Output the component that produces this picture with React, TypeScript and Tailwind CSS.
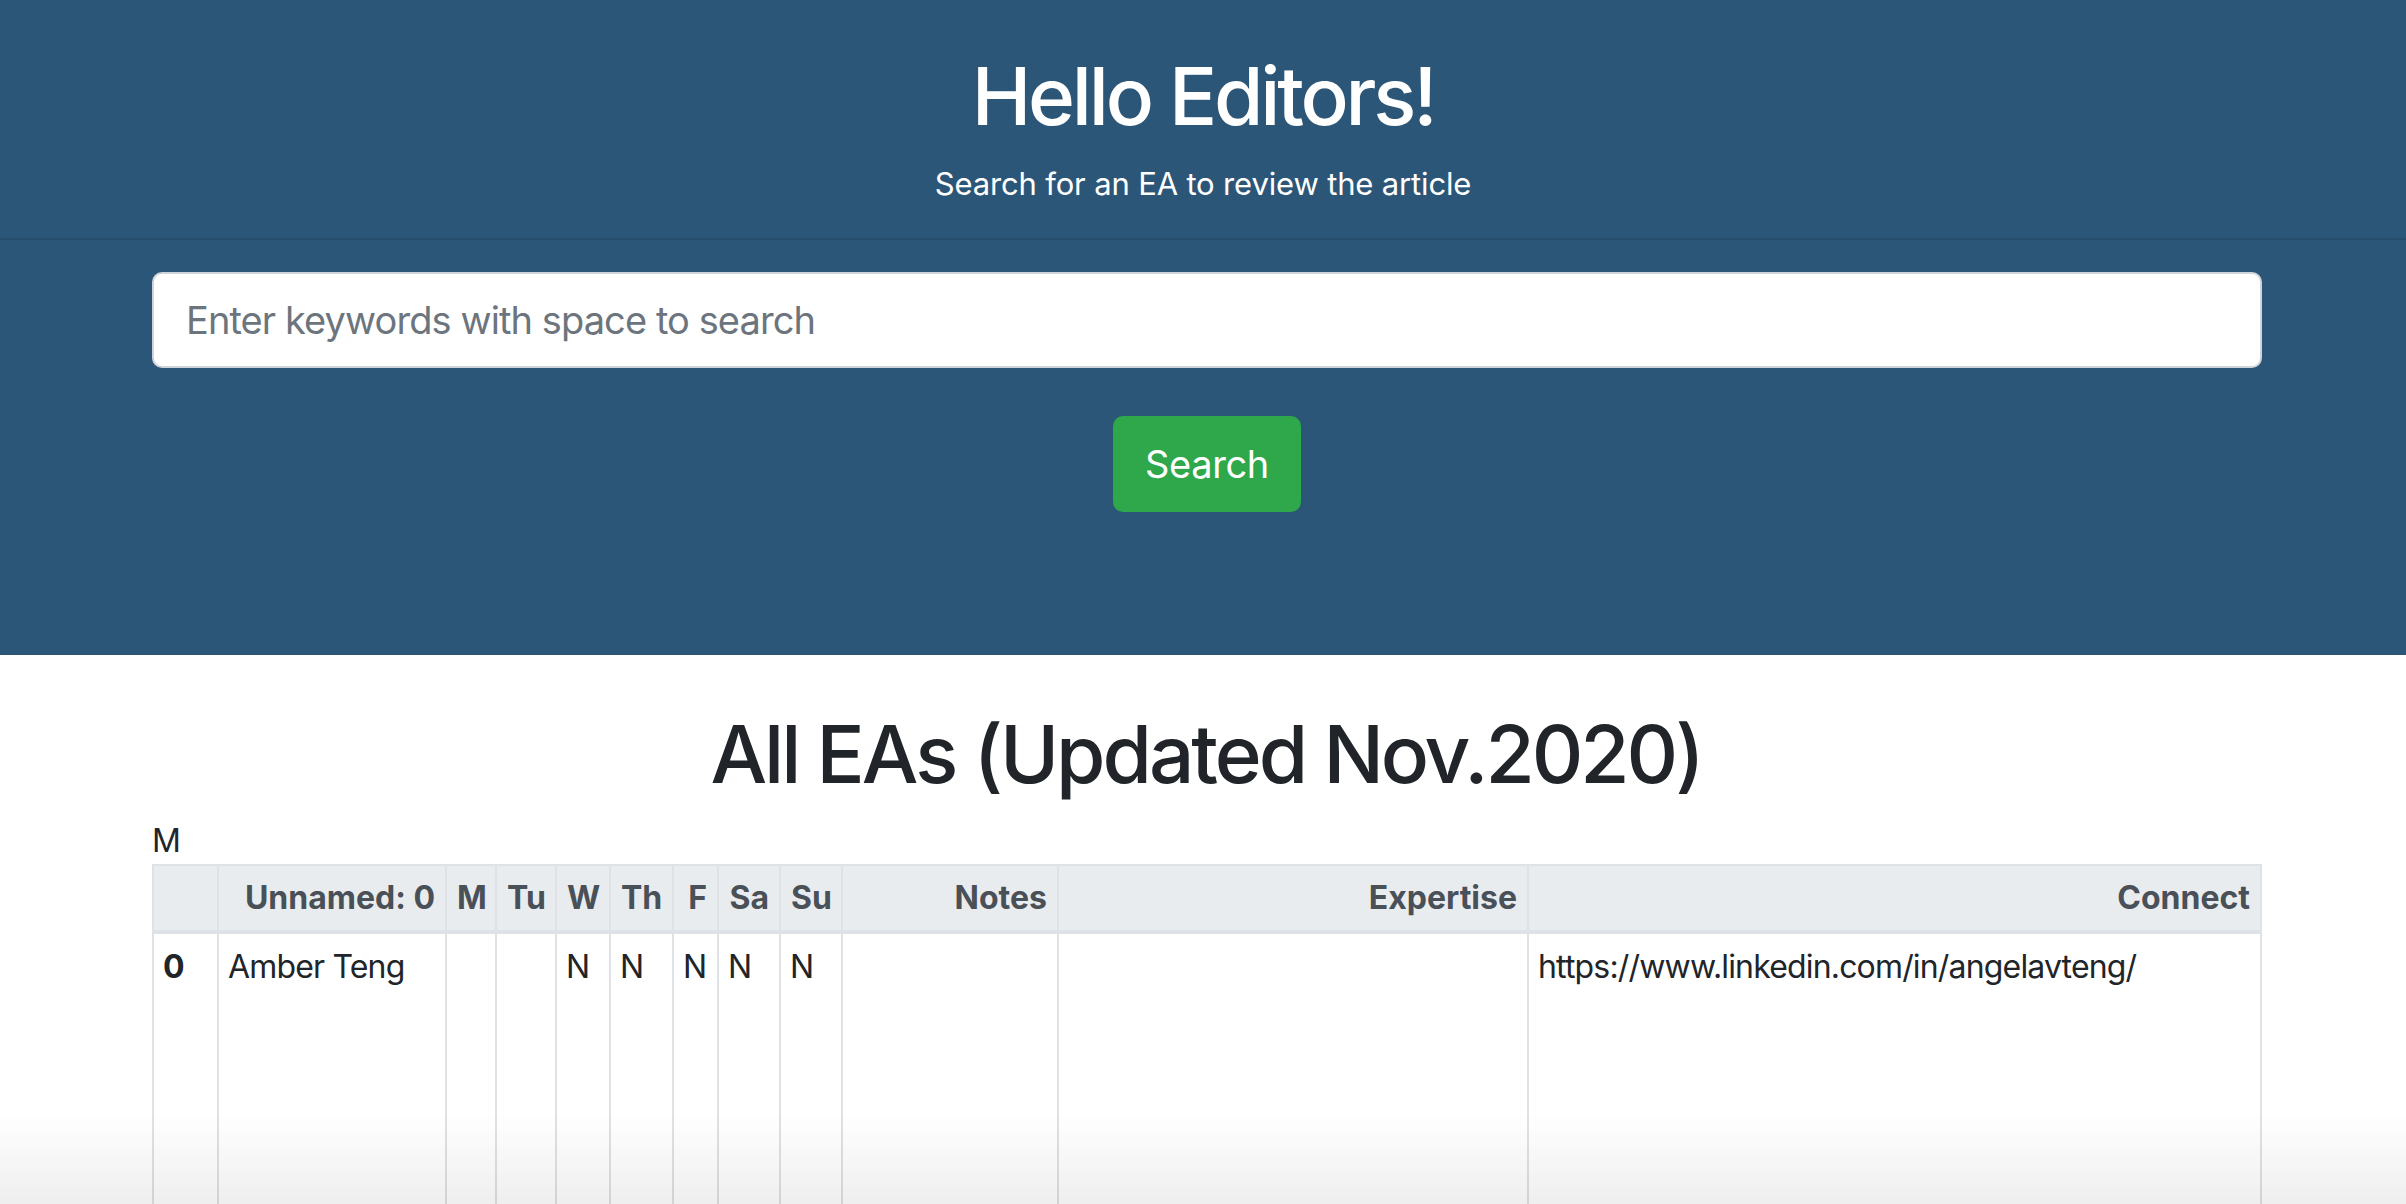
import React from 'react';

const days = ['M', 'Tu', 'W', 'Th', 'F', 'Sa', 'Su'];

const row = {
  idx: '0',
  name: 'Amber Teng',
  days: ['', '', 'N', 'N', 'N', 'N', 'N'],
  notes: '',
  expertise: '',
  connect: 'https://www.linkedin.com/in/angelavteng/',
};

const th =
  'border-2 border-[#dee2e6] border-b-4 px-[10px] py-2 text-right font-bold text-[#495057]';
const td =
  'border-2 border-[#dee2e6] px-[9px] pt-[9px] pb-0 align-top text-left tracking-[-0.026em]';

export default function App() {
  return (
    <div
      className="relative min-h-screen bg-white text-[32px] leading-[48px] text-[#212529]"
      style={{ fontFamily: 'Inter, "Noto Sans", "Liberation Sans", sans-serif' }}
    >
      {/* header */}
      <header className="h-[655px] bg-[#2c5677] text-white">
        <div className="border-b-2 border-[#264c6b] pt-[48px] pb-[31px] text-center">
          <h1 className="text-[80px] leading-[96px] font-medium tracking-[-0.04em]">
            Hello Editors!
          </h1>
          <p className="mt-[17px] text-[31px] leading-[46px] tracking-[-0.005em]">
            Search for an EA to review the article
          </p>
        </div>
        <div className="ml-[152px] flex w-[2110px] flex-col items-center pt-[32px]">
          <input
            type="text"
            placeholder="Enter keywords with space to search"
            className="h-[96px] w-full rounded-[10px] border-2 border-[#ced4da] bg-white px-[32px] text-[38px] tracking-[-0.024em] text-[#495057] outline-none placeholder:text-[#6c757d]"
          />
          <button className="mt-[48px] h-[96px] w-[188px] rounded-[10px] bg-[#2ea84b] text-[38px] tracking-[-0.01em] text-white">
            Search
          </button>
        </div>
      </header>

      {/* table section */}
      <section className="ml-[150px] w-[2112px] pt-[51px]">
        <h2 className="text-center text-[80px] leading-[96px] font-medium tracking-[-0.038em]">
          All EAs (Updated Nov.2020)
        </h2>
        <div className="mt-[16px] ml-[2px] leading-[46px]">M</div>
        <table className="ml-[2px] w-[2110px] table-fixed border-collapse border-2 border-[#dee2e6]">
          <colgroup>
            <col className="w-[65px]" />
            <col className="w-[228px]" />
            <col className="w-[50px]" />
            <col className="w-[60px]" />
            <col className="w-[54px]" />
            <col className="w-[63px]" />
            <col className="w-[45px]" />
            <col className="w-[62px]" />
            <col className="w-[62px]" />
            <col className="w-[216px]" />
            <col className="w-[470px]" />
            <col />
          </colgroup>
          <thead className="bg-[#e9ecef]">
            <tr>
              <th className={th}></th>
              <th className={th}>Unnamed: 0</th>
              {days.map((d) => (
                <th key={d} className={th}>
                  {d}
                </th>
              ))}
              <th className={th}>Notes</th>
              <th className={th}>Expertise</th>
              <th className={th}>Connect</th>
            </tr>
          </thead>
          <tbody>
            <tr className="h-[400px]">
              <th className={`${td} font-bold`}>{row.idx}</th>
              <td className={td}>{row.name}</td>
              {row.days.map((v, i) => (
                <td key={i} className={td}>
                  {v}
                </td>
              ))}
              <td className={td}>{row.notes}</td>
              <td className={td}>{row.expertise}</td>
              <td className={td}>{row.connect}</td>
            </tr>
          </tbody>
        </table>
      </section>

      {/* bottom fade over the page edge */}
      <div className="pointer-events-none fixed bottom-0 left-0 h-[90px] w-full bg-gradient-to-b from-transparent to-black/[0.065]" />
    </div>
  );
}
